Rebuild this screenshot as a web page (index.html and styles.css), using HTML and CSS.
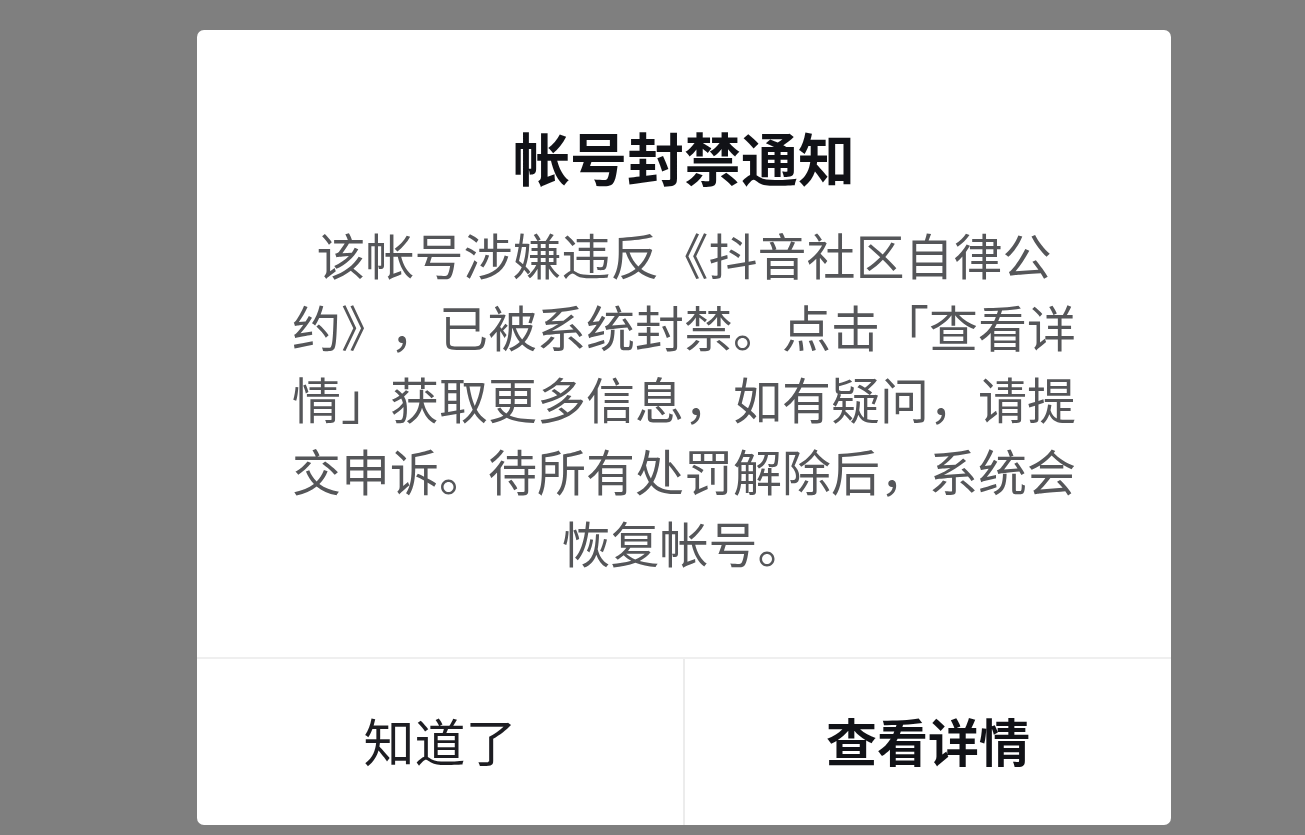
FILE: index.html
```html
<!DOCTYPE html>
<html lang="zh-CN">
<head>
<meta charset="utf-8">
<title>帐号封禁通知</title>
<link rel="stylesheet" href="styles.css">
</head>
<body>
<div class="overlay">
  <div class="dialog">
    <div class="content">
      <h1 class="title">帐号封禁通知</h1>
      <p class="message">该帐号涉嫌违反《抖音社区自律公<br>约》，已被系统封禁。点击「查看详<br>情」获取更多信息，如有疑问，请提<br>交申诉。待所有处罚解除后，系统会<br>恢复帐号。</p>
    </div>
    <div class="actions">
      <div class="btn btn-cancel">知道了</div>
      <div class="btn btn-primary">查看详情</div>
    </div>
  </div>
</div>
</body>
</html>
```

FILE: styles.css
```css
html, body {
  margin: 0;
  padding: 0;
  height: 100%;
}
body {
  background: #7f7f7f;
  font-family: "Noto Sans CJK SC", "Noto Sans", sans-serif;
  overflow: hidden;
  text-spacing-trim: space-all;
}
.overlay {
  height: 100%;
  display: flex;
  justify-content: flex-start;
  padding: 30px 0 0 197px;
  box-sizing: border-box;
}
.dialog {
  width: 974px;
  height: 795px;
  background: #fff;
  border-radius: 7px;
  display: flex;
  flex-direction: column;
  overflow: hidden;
}
.content {
  flex: 1;
  display: flex;
  flex-direction: column;
  align-items: center;
  padding-top: 86px;
}
.title {
  margin: 0;
  font-size: 57px;
  line-height: 80px;
  font-weight: 700;
  color: #111217;
  letter-spacing: 0;
}
.message {
  margin: 22px 0 0;
  width: 800px;
  text-align: center;
  font-size: 49px;
  line-height: 72px;
  color: #555659;
  white-space: nowrap;
  text-spacing-trim: space-all;
}
.actions {
  height: 166px;
  display: flex;
  border-top: 2px solid #efefef;
}
.btn {
  flex: 1;
  display: flex;
  align-items: center;
  justify-content: center;
  font-size: 51px;
  color: #1d1d22;
  padding-bottom: 4px;
}
.btn-cancel {
  border-right: 2px solid #ececec;
}
.btn-primary {
  font-weight: 700;
  color: #111217;
}
```
